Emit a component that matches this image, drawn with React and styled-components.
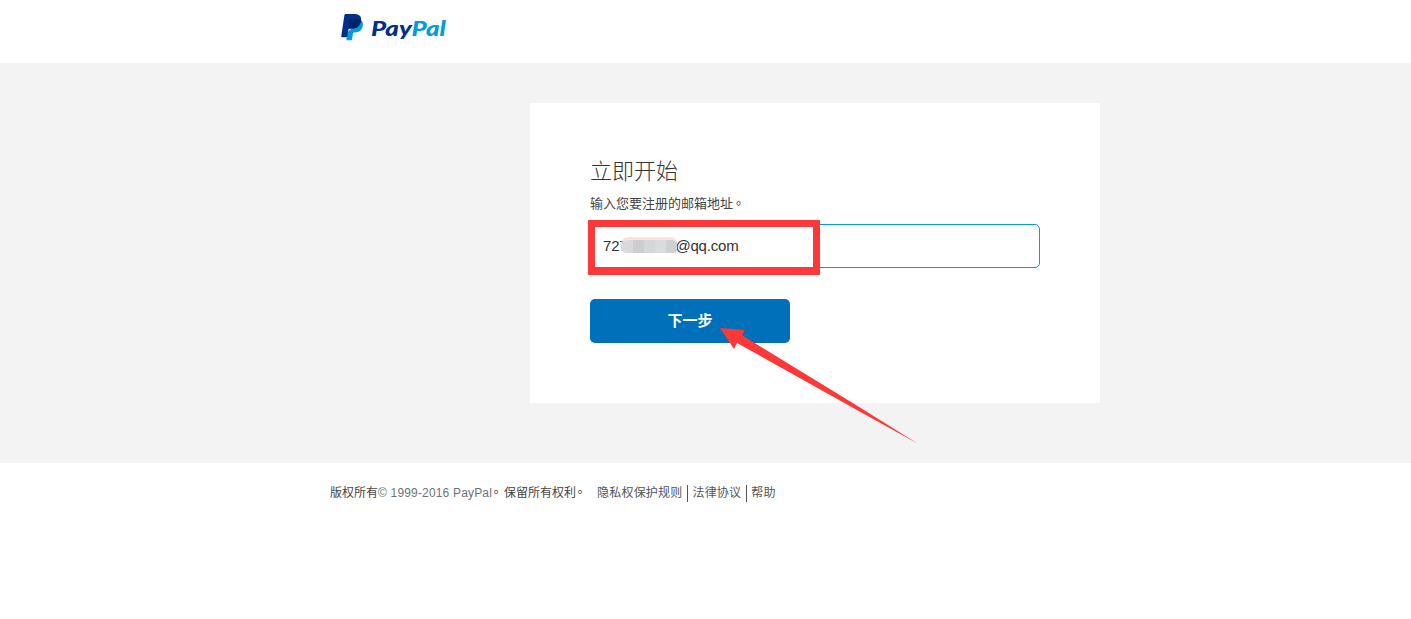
import { useState } from "react";
import styled, { createGlobalStyle } from "styled-components";

const links = ["隐私权保护规则", "法律协议", "帮助"];
const shades = ["#d9dadb", "#cdcdcf", "#d5d6d7", "#dadbdc", "#cfd0d2"];

function Logo() {
  return (
    <LogoLink href="#" aria-label="PayPal">
      <svg width="23" height="27" viewBox="0 0 23 27">
        <path
          fill="#009cde"
          d="M19.500 5.800c2 1.200 2.800 3.300 2.300 6-.9 4.800-3.700 6.700-7.900 6.700h-.9c-.5 0-.9.4-1 .9l-1 6c-.1.600-.5.900-1 .9H5.300l1.200-8z"
        />
        <path
          fill="#003087"
          d="M4.800 0h8.300c5 0 7.700 2.100 6.900 6.900-.9 5.100-4.100 7.500-9 7.500H9c-.8 0-1.300.4-1.500 1.200L6.300 22.400c-.1.500-.4.800-.9.800H.8c-.5 0-.7-.3-.6-.8L3.400 1.200C3.500.4 4 0 4.800 0z"
        />
        <path
          fill="#012169"
          d="M9.300 5.200h7.200c1.300 0 2.500.2 3.500.7v1c-.9 5.100-4.100 7.500-9 7.500H9c-.8 0-1.200.3-1.500.9l1.300-9.500c.1-.400.200-.600.500-.600z"
        />
      </svg>
      <Wordmark>
        Pay<span>Pal</span>
      </Wordmark>
    </LogoLink>
  );
}

export default function App() {
  const [focused, setFocused] = useState(true);
  return (
    <>
      <GlobalStyle />
      <Header>
        <Logo />
      </Header>
      <Main>
        <Card>
          <Title>立即开始</Title>
          <Hint>
            输入您要注册的邮箱地址<Stop>。</Stop>
          </Hint>
          <Field $focused={focused} onClick={() => setFocused(true)}>
            <Email>727</Email>
            <Mosaic>
              {shades.map((c) => (
                <Block key={c} $color={c} />
              ))}
            </Mosaic>
            <Email>@qq.com</Email>
            <Highlight />
          </Field>
          <Button type="button">下一步</Button>
          <Arrow width="198" height="117" viewBox="0 0 198 117">
            <path fill="#fc3838" d="M0 0L25 2L22 7.200L140 79.600L197.500 115.500L140 83.800L17 15L14 21z" />
          </Arrow>
        </Card>
      </Main>
      <Footer>
        <Copyright>
          版权所有<Latin>© 1999-2016 PayPal</Latin>
          <Stop $shift>。</Stop>保留所有权利<Stop $shift>。</Stop>
        </Copyright>
        <Links>
          {links.map((link) => (
            <li key={link}>
              <a href="#">{link}</a>
            </li>
          ))}
        </Links>
      </Footer>
    </>
  );
}

const GlobalStyle = createGlobalStyle`
  * {
    box-sizing: border-box;
  }
  body {
    margin: 0;
    background: #fff;
    color: #333;
    font-family: "Liberation Sans", "Noto Sans CJK SC", sans-serif;
  }
`;

const Header = styled.header`
  height: 63px;
  padding: 14px 0 0 341px;
`;

const LogoLink = styled.a`
  display: inline-flex;
  align-items: flex-start;
  gap: 7px;
  text-decoration: none;
`;

const Wordmark = styled.span`
  color: #003087;
  font-family: Lato, sans-serif;
  font-size: 21.5px;
  font-style: italic;
  font-weight: 900;
  line-height: 29px;
  transform: scaleX(1.2);
  transform-origin: left;
  span {
    color: #009cde;
  }
`;

const Main = styled.main`
  height: 400px;
  padding: 40px 0 0 530px;
  background: #f3f3f3;
`;

const Card = styled.section`
  position: relative;
  display: flex;
  flex-direction: column;
  align-items: flex-start;
  width: 570px;
  height: 300px;
  padding: 54px 60px 0;
  background: #fff;
`;

const Title = styled.h1`
  margin: 0;
  font-size: 22px;
  font-weight: 300;
  line-height: 30px;
`;

const Hint = styled.p`
  margin: 7px 0 10px;
  color: #444;
  font-size: 13px;
  line-height: 20px;
`;

/* full stop centred in its cell */
const Stop = styled.span`
  margin-left: ${(p) => (p.$shift ? "-2px" : "-1px")};
  margin-right: ${(p) => (p.$shift ? "2px" : "1px")};
  font-family: "Noto Sans CJK TC", sans-serif;
  line-height: 1;
`;

const Field = styled.div`
  position: relative;
  display: flex;
  align-items: center;
  width: 450px;
  height: 44px;
  padding-left: 12px;
  border: 1px solid ${(p) => (p.$focused ? "#009cde" : "#9da3a6")};
  border-radius: 5px;
  font-size: 15px;
`;

const Email = styled.span`
  margin-top: -2px;
  letter-spacing: -0.2px;
`;

const Mosaic = styled.span`
  z-index: 1;
  display: flex;
  width: 56px;
  height: 16px;
  margin: -3px -2px 0 -6px;
  border-top: 3px solid #fde0e1;
  border-radius: 7px 6px 3px 5px;
  overflow: hidden;
`;

const Block = styled.i`
  flex: 1;
  background: ${(p) => p.$color};
`;

/* red frame drawn over the address */
const Highlight = styled.div`
  position: absolute;
  top: -5px;
  left: -3px;
  width: 232px;
  height: 55px;
  border: 7px solid #fc3838;
`;

const Button = styled.button`
  width: 200px;
  height: 44px;
  margin-top: 31px;
  padding: 0;
  border: 0;
  border-radius: 5px;
  background: #0070ba;
  color: #fff;
  font-family: inherit;
  font-size: 15px;
  font-weight: 700;
  line-height: 44px;
`;

const Arrow = styled.svg`
  position: absolute;
  top: 225px;
  left: 190px;
  pointer-events: none;
`;

const Footer = styled.footer`
  display: flex;
  align-items: flex-start;
  padding: 21px 0 0 330px;
  color: #444;
  font-size: 12px;
  line-height: 18px;
`;

const Copyright = styled.p`
  margin: 0;
  white-space: nowrap;
`;

const Latin = styled.span`
  color: #6c7378;
  letter-spacing: 0.17px;
`;

const Links = styled.ul`
  display: flex;
  margin: 1px 0 0 9px;
  padding: 0;
  line-height: 17px;
  list-style: none;
  li + li {
    margin-left: 5px;
    padding-left: 4px;
    border-left: 1px solid #555;
  }
  a {
    color: #555;
    letter-spacing: 0.2px;
    text-decoration: none;
  }
`;
